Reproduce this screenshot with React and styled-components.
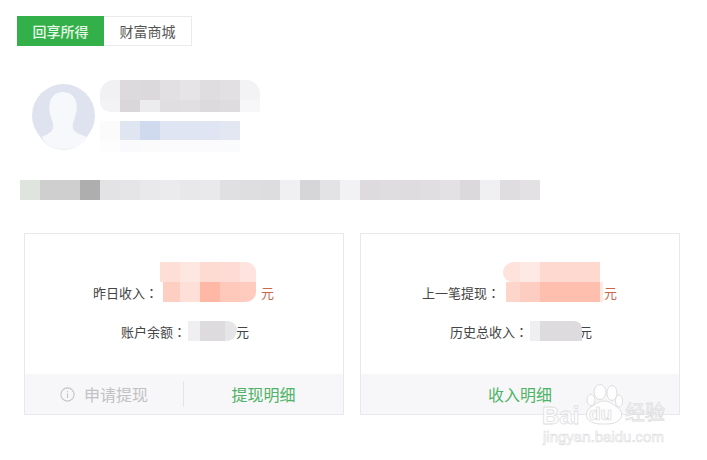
import React from "react";
import styled, { createGlobalStyle } from "styled-components";

const Global = createGlobalStyle`
  html, body { margin: 0; padding: 0; background: #fff; }
  body { font-family: "Noto Sans CJK SC", "Liberation Sans", sans-serif; }
`;
const Page = styled.div`
  position: relative; width: 707px; height: 460px; overflow: hidden; box-sizing: border-box;
  padding: 16px 0 0 17px; display: flex; flex-direction: column; align-items: flex-start;
`;
const Tabs = styled.div`display: flex; height: 30px;`;
const Tab = styled.div`
  width: ${p => (p.$active ? "87px" : "88px")}; box-sizing: border-box; display: flex; align-items: center; justify-content: center;
  font-size: 14px; font-weight: ${p => (p.$active ? 500 : 400)}; background: ${p => (p.$active ? "#34b04a" : "#fff")}; color: ${p => (p.$active ? "#e4f6e6" : "#555")};
  border: ${p => (p.$active ? "none" : "1px solid #ebebeb")}; ${p => (!p.$active ? "border-left: none;" : "")}
`;
const Profile = styled.div`display: flex; margin: 34px 0 0 15px; align-items: flex-start;`;
const Avatar = styled.svg`width: 63px; height: 67px; margin-top: 4px; flex: none;`;
const Who = styled.div`display: flex; flex-direction: column; margin-left: 5px;`;
const MosaicRow = styled.div`display: flex; height: ${p => p.$h}px;`;
const Cell = styled.div`
  width: ${p => p.$w || 20}px; height: 100%; background: ${p => p.$c}; flex: none;
  border-radius: ${p => p.$r || 0};
`;
const NameBlock = styled.div`display: flex; flex-direction: column;`;
const Handle = styled.div`display: flex; flex-direction: column; margin-top: 9px;`;
const LongBar = styled.div`display: flex; height: 20px; margin: 28px 0 0 3px;`;
const Cards = styled.div`display: flex; gap: 16px; margin: 33px 0 0 7px;`;
const Card = styled.div`
  width: 320px; height: 182px; box-sizing: border-box; border: 1px solid #e8e8ec; display: flex; flex-direction: column; background: #fff;
`;
const Body = styled.div`flex: 1; display: flex; flex-direction: column; align-items: stretch; padding-top: 48px; box-sizing: border-box;`;
const Line = styled.div`
  display: flex; align-items: center; height: 20px; font-size: 13px; color: #444; margin-bottom: 19px; padding-left: ${p => p.$pl}px; white-space: nowrap;
`;
const Colon = styled.span`font-family: "Noto Sans CJK TC", sans-serif;`;
const Blur = styled.div`position: relative; width: ${p => p.$w}px; height: 20px; margin-left: ${p => p.$ml}px; margin-right: ${p => p.$mr}px; flex: none;`;
const BlurRow = styled.div`display: flex; position: absolute; left: ${p => p.$l || 0}px; top: ${p => p.$t}px; height: 20px;`;
const Unit = styled.span`color: ${p => (p.$red ? "#c9684f" : "#444")}; font-size: 13px;`;
const Footer = styled.div`height: 40px; background: #f7f7f9; display: flex; align-items: center; font-size: 16px;`;
const Action = styled.div`
  flex: 1; display: flex; align-items: center; justify-content: center; gap: 9px; height: 26px;
  color: ${p => (p.$off ? "#c2c2c4" : "#4fb366")};
  ${p => (p.$off ? "flex: 0 0 158px; border-right: 1px solid #e5e5e7;" : "")}
`;
const Mark = styled.div`position: absolute; left: 542px; top: 385px; width: 130px; height: 60px; pointer-events: none;`;
const MarkCn = styled.span`
  position: absolute; left: 83px; top: 14px; font-size: 20px; line-height: 26px; color: rgba(255,255,255,.7); -webkit-text-stroke: .8px #dedee0; white-space: nowrap;
`;
const MarkBai = styled.span`
  position: absolute; left: 0; top: 19px; font-family: "Liberation Sans", sans-serif; font-size: 24px; line-height: 24px; font-weight: 700; color: rgba(255,255,255,.8); -webkit-text-stroke: .8px #dedee0;
`;
const MarkDu = styled.span`
  position: absolute; left: 47px; top: 19px; font-family: "Liberation Sans", sans-serif; font-size: 19px; line-height: 20px; font-weight: 700; color: rgba(255,255,255,.9); -webkit-text-stroke: .7px #d8d8da;
`;
const MarkUrl = styled.span`
  position: absolute; left: 1px; top: 44px; font-family: "Liberation Sans", sans-serif; font-size: 15px; line-height: 16px; color: rgba(255,255,255,.85); -webkit-text-stroke: .6px #dcdcde; white-space: nowrap;
`;
const Paw = styled.svg`position: absolute; left: 43px; top: -1px; width: 38px; height: 41px;`;

const Cells = ({ colors }) => colors.map((c, i) => <Cell key={i} $c={c} />);

const name1 = ["#f1f0f2", "#dcdadd", "#dbd9dc", "#e2e0e3", "#e6e4e7", "#dfdde0", "#e2e0e3", "#f3f2f4"];
const name2 = ["#f3f2f4", "#d9d7da", "#ecebed", "#e0dee1", "#e1dfe2", "#dcdadd", "#dedcdf", "#f7f6f8"];
const blue = ["#fbfbfc", "#e0e6f1", "#d0daee", "#dfe5f2", "#dfe5f2", "#dfe5f2", "#e2e7f2"];
const long = ["#dfe4df","#cfcfcf","#d0cfd0","#afaeaf","#e3e2e4","#e5e4e6","#e9e8ea","#ebeaec","#e8e7e9","#e9e8ea","#e0dfe1","#dedde0","#dddcde","#f0eff1","#d6d5d7","#e3e2e4","#f2f1f3","#dddbde","#dfdde0","#dedcdf","#e0dee1","#e3e1e4","#dbd9dc","#f0eff1","#dfdde0","#e3e1e4"];

const Blurred = ({ w, ml, mr, rows }) => (
  <Blur $w={w} $ml={ml} $mr={mr}>
    {rows.map((r, i) => (
      <BlurRow key={i} $t={r.t} $l={r.l}>
        {r.cells.map(([c, cw, rad], j) => <Cell key={j} $c={c} $w={cw} $r={rad} />)}
      </BlurRow>
    ))}
  </Blur>
);

export default function App() {
  return (
    <Page>
      <Global />
      <Tabs>
        <Tab $active>回享所得</Tab>
        <Tab>财富商城</Tab>
      </Tabs>
      <Profile>
        <Avatar viewBox="0 0 63 67">
          <ellipse cx="31.5" cy="35" rx="29" ry="31" fill="#eceef3" />
          <circle cx="31.5" cy="31.5" r="31.5" fill="#dfe3ef" />
          <path d="M10 53C15 50 20 49 21 44C22 40 20 37 19 33C17 28 17 22 18 18C19 12 25 8 31 8C37 8 43 12 44 18C45 22 45 28 43 33C42 37 40 40 41 44C42 49 50 51 55 53C50 62 41 65 31.5 65C22 65 15 62 10 53z" fill="#f7f8fb" />
        </Avatar>
        <Who>
          <NameBlock>
            <MosaicRow $h={20}>
              <Cell $c={name1[0]} $r="14px 0 0 0" />
              {name1.slice(1, 7).map((c, i) => <Cell key={i} $c={c} />)}
              <Cell $c={name1[7]} $r="0 14px 0 0" />
            </MosaicRow>
            <MosaicRow $h={12}>
              <Cell $c={name2[0]} $r="0 0 0 10px" />
              {name2.slice(1, 8).map((c, i) => <Cell key={i} $c={c} />)}
            </MosaicRow>
          </NameBlock>
          <Handle>
            <MosaicRow $h={19}>
              <Cells colors={blue} />
            </MosaicRow>
            <MosaicRow $h={12}>
              <Cells colors={["#fdfdfe", "#fafafc", "#fbfbfc", "#fbfbfd", "#fbfbfd", "#fbfbfd", "#fafbfd"]} />
            </MosaicRow>
          </Handle>
        </Who>
      </Profile>
      <LongBar><Cells colors={long} /></LongBar>
      <Cards>
        <Card>
          <Body>
            <Line $pl={68}>
              昨日收入<Colon>：</Colon>
              <Blurred w={96} ml={2} mr={5} rows={[
                { t: -20, cells: [["#fedfd8", 20], ["#fee6e1", 20], ["#fddbd3", 20], ["#fedcd5", 20], ["#fee3de", 16, "0 10px 0 0"]] },
                { t: 0, l: 3, cells: [["#fdcfc3", 17], ["#fee0d9", 20], ["#ffb8a5", 20], ["#fec9bb", 20], ["#fecbbe", 16, "0 0 10px 0"]] },
              ]} />
              <Unit $red>元</Unit>
            </Line>
            <Line $pl={96}>
              账户余额<Colon>：</Colon>
              <Blurred w={49} ml={2} mr={-1} rows={[
                { t: 0, cells: [["#efeef0", 12], ["#dddbde", 25], ["#e6e5e7", 12, "0 10px 12px 0"]] },
              ]} />
              <Unit>元</Unit>
            </Line>
          </Body>
          <Footer>
            <Action $off>
              <svg width="15" height="15" viewBox="0 0 15 15" fill="none" stroke="#c4c4c6" strokeWidth="1.1">
                <circle cx="7.5" cy="7.5" r="6.6" />
                <path d="M7.5 6.5v4.5M7.5 4v1.3" />
              </svg>
              申请提现
            </Action>
            <Action>提现明细</Action>
          </Footer>
        </Card>
        <Card>
          <Body>
            <Line $pl={61}>
              上一笔提现<Colon>：</Colon>
              <Blurred w={97} ml={3} mr={4} rows={[
                { t: -20, cells: [["#fee3dd", 17, "12px 0 0 10px"], ["#fee9e5", 20], ["#fed9d0", 60]] },
                { t: 0, l: 3, cells: [["#fed5cb", 14], ["#fecdc1", 20], ["#febfaf", 60], ["#feeae5", 3]] },
              ]} />
              <Unit $red>元</Unit>
            </Line>
            <Line $pl={89}>
              历史总收入<Colon>：</Colon>
              <Blurred w={52} ml={2} mr={-3} rows={[
                { t: 0, cells: [["#efeef0", 10], ["#dddbde", 42, "0 8px 0 0"]] },
              ]} />
              <Unit>元</Unit>
            </Line>
          </Body>
          <Footer>
            <Action>收入明细</Action>
          </Footer>
        </Card>
      </Cards>
      <Mark>
        <Paw viewBox="0 0 38 41" fill="rgba(255,255,255,.8)" stroke="#dedee0" strokeWidth="1">
          <ellipse cx="6" cy="16" rx="4" ry="5.5" />
          <ellipse cx="15" cy="8" rx="6" ry="7.5" />
          <ellipse cx="27" cy="9" rx="5" ry="7.5" />
          <ellipse cx="34" cy="17" rx="3.6" ry="6" />
          <path d="M19 17c6 0 8 3 13 6 6 4 6 11 1 14-4 3-9 3-14 3s-10 0-14-3c-5-3-5-10 1-14 5-3 7-6 13-6z" />
        </Paw>
        <MarkDu>du</MarkDu>
        <MarkBai>Bai</MarkBai>
        <MarkCn>经验</MarkCn>
        <MarkUrl>jingyan.baidu.com</MarkUrl>
      </Mark>
    </Page>
  );
}
